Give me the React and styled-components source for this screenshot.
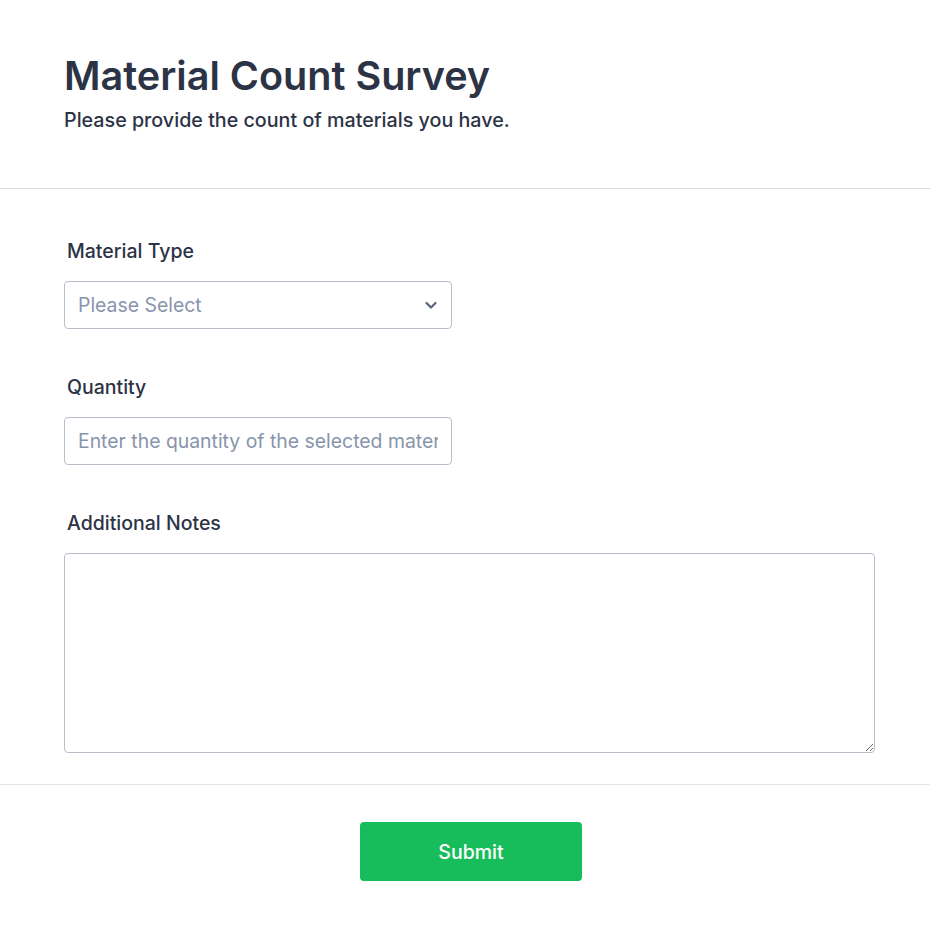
import React from 'react'
import styled, { createGlobalStyle } from 'styled-components'

const GlobalStyle = createGlobalStyle`
  * { box-sizing: border-box; }
  body {
    margin: 0;
    background: #fff;
    font-family: Inter, "Noto Sans", sans-serif;
    color: #2c3345;
  }
`

const Page = styled.div`
  width: 930px;
`

const Header = styled.header`
  padding: 51px 64px 0;
  height: 189px;
  border-bottom: 1px solid #d8dae3;
`

const Title = styled.h1`
  margin: 0;
  font-size: 39.6px;
  font-weight: 600;
  line-height: 50px;
  color: #2c3345;
`

const Subtitle = styled.p`
  margin: 6px 0 0;
  font-size: 19.7px;
  font-weight: 500;
  line-height: 26px;
  color: #2c3345;
`

const Fields = styled.section`
  padding: 50px 55px 31px 64px;
  display: flex;
  flex-direction: column;
  gap: 46px;
  border-bottom: 1px solid #e3e5ec;
`

const Field = styled.div`
  display: flex;
  flex-direction: column;
  gap: 18px;
`

const Label = styled.label`
  padding-left: 3px;
  font-size: 19.5px;
  font-weight: 500;
  line-height: 24px;
  color: #2c3345;
`

const boxStyle = `
  border: 1px solid #b8bdc9;
  border-radius: 4px;
  background: #fff;
  font-family: Inter, "Noto Sans", sans-serif;
  font-size: 19.4px;
  color: #2c3345;
  outline: none;
`

const SelectBox = styled.div`
  ${boxStyle}
  position: relative;
  width: 388px;
  height: 48px;
  display: flex;
  align-items: center;
  padding: 0 13px;
  color: #8894ab;
`

const Chevron = styled.svg`
  position: absolute;
  right: 12px;
  top: 50%;
  transform: translateY(-50%);
`

const TextInput = styled.input`
  ${boxStyle}
  width: 388px;
  height: 48px;
  padding: 0 13px;

  &::placeholder { color: #8894ab; }
`

const TextArea = styled.textarea`
  ${boxStyle}
  display: block;
  width: 811px;
  height: 200px;
  padding: 12px 13px;
  resize: vertical;
`

const Footer = styled.div`
  display: flex;
  justify-content: center;
  padding: 37px 52px 0 64px;
`

const SubmitButton = styled.button`
  width: 222px;
  height: 59px;
  border: none;
  border-radius: 4px;
  background: #18bd5b;
  color: #fff;
  font-family: Inter, "Noto Sans", sans-serif;
  font-size: 19.5px;
  font-weight: 500;
  cursor: pointer;
`

export default function App () {
  return (
    <Page>
      <GlobalStyle />
      <Header>
        <Title>Material Count Survey</Title>
        <Subtitle>Please provide the count of materials you have.</Subtitle>
      </Header>
      <Fields>
        <Field>
          <Label>Material Type</Label>
          <SelectBox>
            Please Select
            <Chevron width='16' height='16' viewBox='0 0 16 16'>
              <path d='M3.5 6l4.5 4.5 4.5-4.5' fill='none' stroke='#57647e' strokeWidth='2.2' strokeLinecap='round' strokeLinejoin='round' />
            </Chevron>
          </SelectBox>
        </Field>
        <Field>
          <Label>Quantity</Label>
          <TextInput placeholder='Enter the quantity of the selected material' />
        </Field>
        <Field>
          <Label>Additional Notes</Label>
          <TextArea />
        </Field>
      </Fields>
      <Footer>
        <SubmitButton>Submit</SubmitButton>
      </Footer>
    </Page>
  )
}
